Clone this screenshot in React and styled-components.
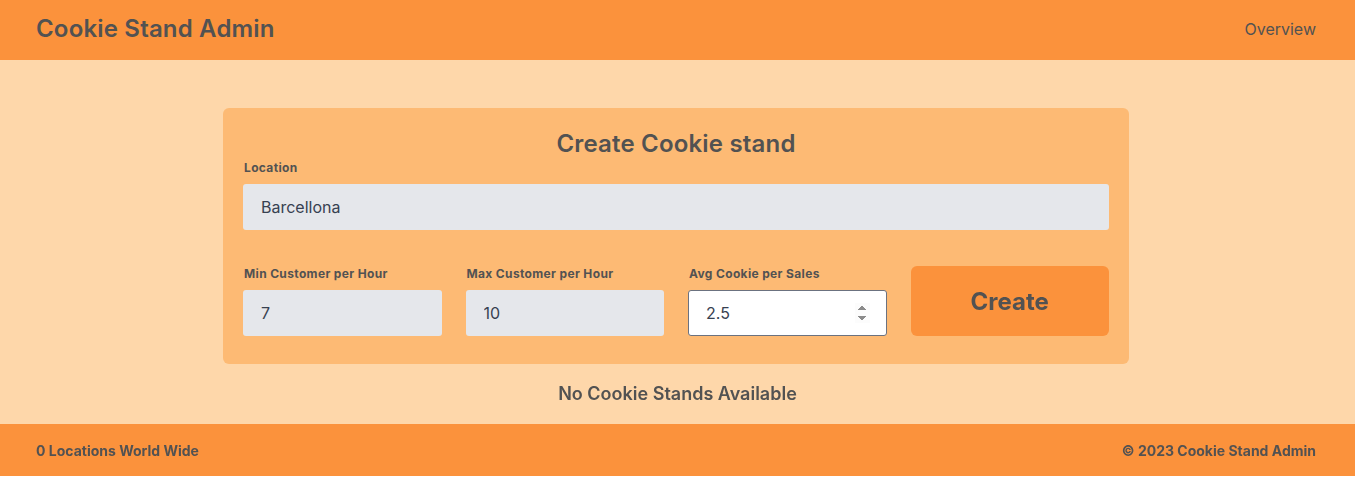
import React from "react";
import styled, { createGlobalStyle } from "styled-components";

const Global = createGlobalStyle`
  html, body { margin: 0; padding: 0; background: #ffffff; }
  body { font-family: Inter, "Noto Sans", sans-serif; color: #525252; }
  * { box-sizing: border-box; }
`;

const Page = styled.div`
  display: flex;
  flex-direction: column;
  width: 100%;
`;

const Header = styled.header`
  height: 60px;
  background: #fb923c;
  display: flex;
  align-items: center;
  justify-content: space-between;
  padding: 0 39px 3px 36px;
`;

const Brand = styled.h1`
  margin: 0;
  font-size: 24px;
  line-height: 32px;
  font-weight: 600;
  letter-spacing: 0.18px;
  color: #525252;
`;

const NavLink = styled.a`
  font-size: 16px;
  color: #525252;
  text-decoration: none;
`;

const Main = styled.main`
  background: #fed7aa;
  display: flex;
  flex-direction: column;
  align-items: center;
  padding: 48px 0 16px;
`;

const Card = styled.form`
  width: 906px;
  margin-right: 3px;
  background: #fdba74;
  border-radius: 6px;
  padding: 20px 20px 28px;
  display: flex;
  flex-direction: column;
`;

const CardTitle = styled.h2`
  margin: 0;
  text-align: center;
  font-size: 24px;
  line-height: 32px;
  font-weight: 600;
  letter-spacing: 0.18px;
  color: #525252;
`;

const Field = styled.label`
  display: flex;
  flex-direction: column;
  gap: 8px;
`;

const FieldLabel = styled.span`
  font-size: 12px;
  line-height: 16px;
  font-weight: 700;
  letter-spacing: 0.35px;
  padding-left: 1px;
  color: #525252;
`;

const Input = styled.input`
  height: 46px;
  width: 100%;
  border: 1px solid transparent;
  border-radius: 3px;
  background: #e5e7eb;
  padding: 0 16px 0 17px;
  font-family: Inter, "Noto Sans", sans-serif;
  font-size: 16px;
  color: #374151;
  outline: none;
  &:focus {
    background: #ffffff;
    border-color: #6b7280;
  }
`;

const Grid = styled.div`
  margin-top: 36px;
  display: grid;
  grid-template-columns: repeat(4, 1fr);
  gap: 24px;
  align-items: end;
`;

const CreateButton = styled.button`
  height: 70px;
  border: none;
  border-radius: 6px;
  background: #fb923c;
  font-family: Inter, "Noto Sans", sans-serif;
  font-size: 24px;
  font-weight: 700;
  color: #525252;
  cursor: pointer;
`;

const Empty = styled.p`
  margin: 16px 0 0;
  font-size: 18px;
  line-height: 28px;
  font-weight: 600;
  color: #525252;
`;

const Footer = styled.footer`
  height: 52px;
  background: #fb923c;
  display: flex;
  align-items: center;
  justify-content: space-between;
  padding: 0 39px 0 36px;
  font-size: 14px;
  font-weight: 700;
  color: #525252;
`;

export default function App() {
  return (
    <Page>
      <Global />
      <Header>
        <Brand>Cookie Stand Admin</Brand>
        <NavLink href="#">Overview</NavLink>
      </Header>
      <Main>
        <Card onSubmit={(e) => e.preventDefault()}>
          <CardTitle>Create Cookie stand</CardTitle>
          <Field>
            <FieldLabel>Location</FieldLabel>
            <Input type="text" defaultValue="Barcellona" />
          </Field>
          <Grid>
            <Field>
              <FieldLabel>Min Customer per Hour</FieldLabel>
              <Input type="number" defaultValue="7" />
            </Field>
            <Field>
              <FieldLabel>Max Customer per Hour</FieldLabel>
              <Input type="number" defaultValue="10" />
            </Field>
            <Field>
              <FieldLabel>Avg Cookie per Sales</FieldLabel>
              <Input type="number" step="0.1" defaultValue="2.5" autoFocus />
            </Field>
            <CreateButton type="submit">Create</CreateButton>
          </Grid>
        </Card>
        <Empty>No Cookie Stands Available</Empty>
      </Main>
      <Footer>
        <span>0 Locations World Wide</span>
        <span>© 2023 Cookie Stand Admin</span>
      </Footer>
    </Page>
  );
}
